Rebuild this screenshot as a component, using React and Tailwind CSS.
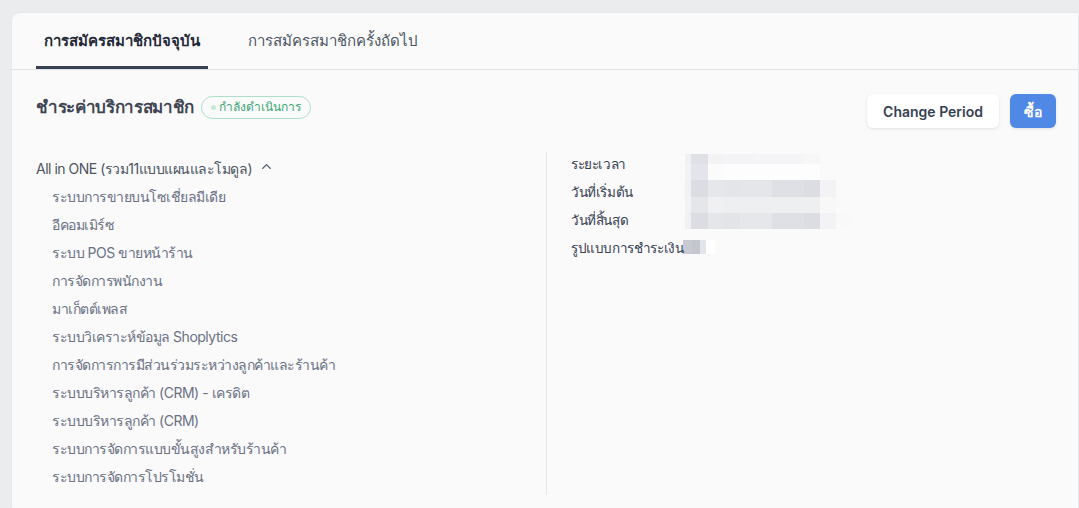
import React from "react";
import { ChevronUp } from "lucide-react";

const modules = [
  "ระบบการขายบนโซเชี่ยลมีเดีย",
  "อีคอมเมิร์ซ",
  "ระบบ POS ขายหน้าร้าน",
  "การจัดการพนักงาน",
  "มาเก็ตต์เพลส",
  "ระบบวิเคราะห์ข้อมูล Shoplytics",
  "การจัดการการมีส่วนร่วมระหว่างลูกค้าและร้านค้า",
  "ระบบบริหารลูกค้า (CRM) - เครดิต",
  "ระบบบริหารลูกค้า (CRM)",
  "ระบบการจัดการแบบขั้นสูงสำหรับร้านค้า",
  "ระบบการจัดการโปรโมชั่น",
];

// pixelated (blurred) value blocks
const cols = [686, 692, 709, 725, 741, 757, 773, 789, 805, 821, 837, 853];
const rows = [154, 164, 180, 197, 213, 229];
const shades = [
  ["#f1f1f3", "#e0e1e6", "#f3f3f5", "#f4f4f6", "#f4f4f6", "#f5f5f7", "#f5f5f7", "#f5f5f7", "#f7f7f8", "#fafafa", "#fafafa"],
  ["#f3f3f5", "#e4e5ea", "#fbfbfb", "#fdfdfd", "#fdfdfd", "#fdfdfd", "#fdfdfd", "#fdfdfd", "#fdfdfd", "#fafafa", "#fafafa"],
  ["#f1f1f3", "#dcdde2", "#e6e7eb", "#e4e5e9", "#e5e6ea", "#e5e6ea", "#dfe0e5", "#dfe0e5", "#dcdde2", "#f3f3f5", "#fafafa"],
  ["#f3f3f5", "#e5e6ea", "#f0f0f3", "#eeeff1", "#eeeff1", "#eeeff1", "#eeeff1", "#eeeff1", "#eeeff1", "#f8f8f9", "#fafafa"],
  ["#f1f1f3", "#dcdde2", "#e5e6ea", "#e3e4e8", "#e6e7eb", "#e6e7eb", "#dfe0e5", "#dfe0e5", "#dcdde2", "#f3f3f5", "#f9f9fa"],
];

function Pixelated() {
  return (
    <svg
      width="200"
      height="110"
      viewBox="682 152 200 110"
      className="absolute left-[134px] top-0"
    >
      {shades.map((row, r) =>
        row.map((c, i) => (
          <rect
            key={r + "-" + i}
            x={cols[i]}
            y={rows[r]}
            width={cols[i + 1] - cols[i]}
            height={rows[r + 1] - rows[r]}
            fill={c}
          />
        ))
      )}
      <rect x="684" y="240" width="9" height="14" fill="#c9cad1" />
      <rect x="693" y="240" width="8" height="14" fill="#c4c6ce" />
      <rect x="701" y="240" width="6" height="14" fill="#e4e5ea" />
      <rect x="707" y="240" width="9" height="14" fill="#ffffff" />
    </svg>
  );
}

export default function App() {
  return (
    <div
      className="h-[508px] w-[1079px] overflow-hidden bg-[#ebecee] pt-[13px] pl-3"
      style={{ fontFamily: "Inter, 'Noto Sans', sans-serif" }}
    >
      <div className="h-full w-[1066px] rounded-tl-lg bg-[#fafafa] shadow-[0_0_2px_rgba(0,0,0,0.06)]">
        {/* Tabs */}
        <div className="flex h-[57px] items-end border-b border-[#dfe3e8] px-6">
          <div className="flex h-full items-center border-b-[3px] border-[#374151] px-2 pt-[3px] text-[15px] font-semibold text-[#1f2937]">
            การสมัครสมาชิกปัจจุบัน
          </div>
          <div className="ml-8 flex h-full items-center px-2 text-[15px] text-[#4b5563]">
            การสมัครสมาชิกครั้งถัดไป
          </div>
        </div>

        {/* Content */}
        <div className="pl-6 pr-[22px] pt-6">
          <div className="flex items-start justify-between">
            <div className="flex items-center gap-[7px] pt-px">
              <h2 className="text-[17px] font-bold leading-6 tracking-[-0.02em] text-[#3f4552]">
                ชำระค่าบริการสมาชิก
              </h2>
              <span className="flex h-[23px] items-center gap-[3px] rounded-full border border-[#aee0c9] px-[9px] text-[12px] font-medium text-[#3aa876]">
                <span className="h-[5px] w-[5px] rounded-full bg-[#c4e9d7]" />
                กำลังดำเนินการ
              </span>
            </div>
            <div className="flex items-center gap-[11px]">
              <button className="h-[34px] rounded-md bg-white px-4 text-[14px] font-semibold text-[#374151] shadow-[0_1px_3px_rgba(0,0,0,0.1)]">
                Change Period
              </button>
              <button className="h-[34px] rounded-md bg-[#5088e6] px-[14px] text-[14px] font-semibold text-white shadow-[0_1px_3px_rgba(0,0,0,0.1)]">
                ซื้อ
              </button>
            </div>
          </div>

          <div className="mt-6 flex">
            <div className="w-[511px] border-r border-[#e6e6e8] pt-[7px] pb-2 text-[14px] leading-5 tracking-[-0.035em]">
              <div className="flex items-center gap-[7px] text-[#4b5563]">
                <span>All in ONE (รวม11แบบแผนและโมดูล)</span>
                <ChevronUp size={15} strokeWidth={2} className="-mt-[6px] text-[#4b5470]" />
              </div>
              <div className="mt-2 flex flex-col gap-2 pl-4 text-[#6b7185]">
                {modules.map((m) => (
                  <div key={m}>{m}</div>
                ))}
              </div>
            </div>
            <div className="relative flex flex-col gap-2 pl-6 pt-[2px] text-[13.5px] leading-5 tracking-[-0.03em] text-[#374151]">
              <Pixelated />
              <div className="relative">ระยะเวลา</div>
              <div className="relative">วันที่เริ่มต้น</div>
              <div className="relative">วันที่สิ้นสุด</div>
              <div className="relative">รูปแบบการชำระเงิน</div>
            </div>
          </div>
        </div>
      </div>
    </div>
  );
}
